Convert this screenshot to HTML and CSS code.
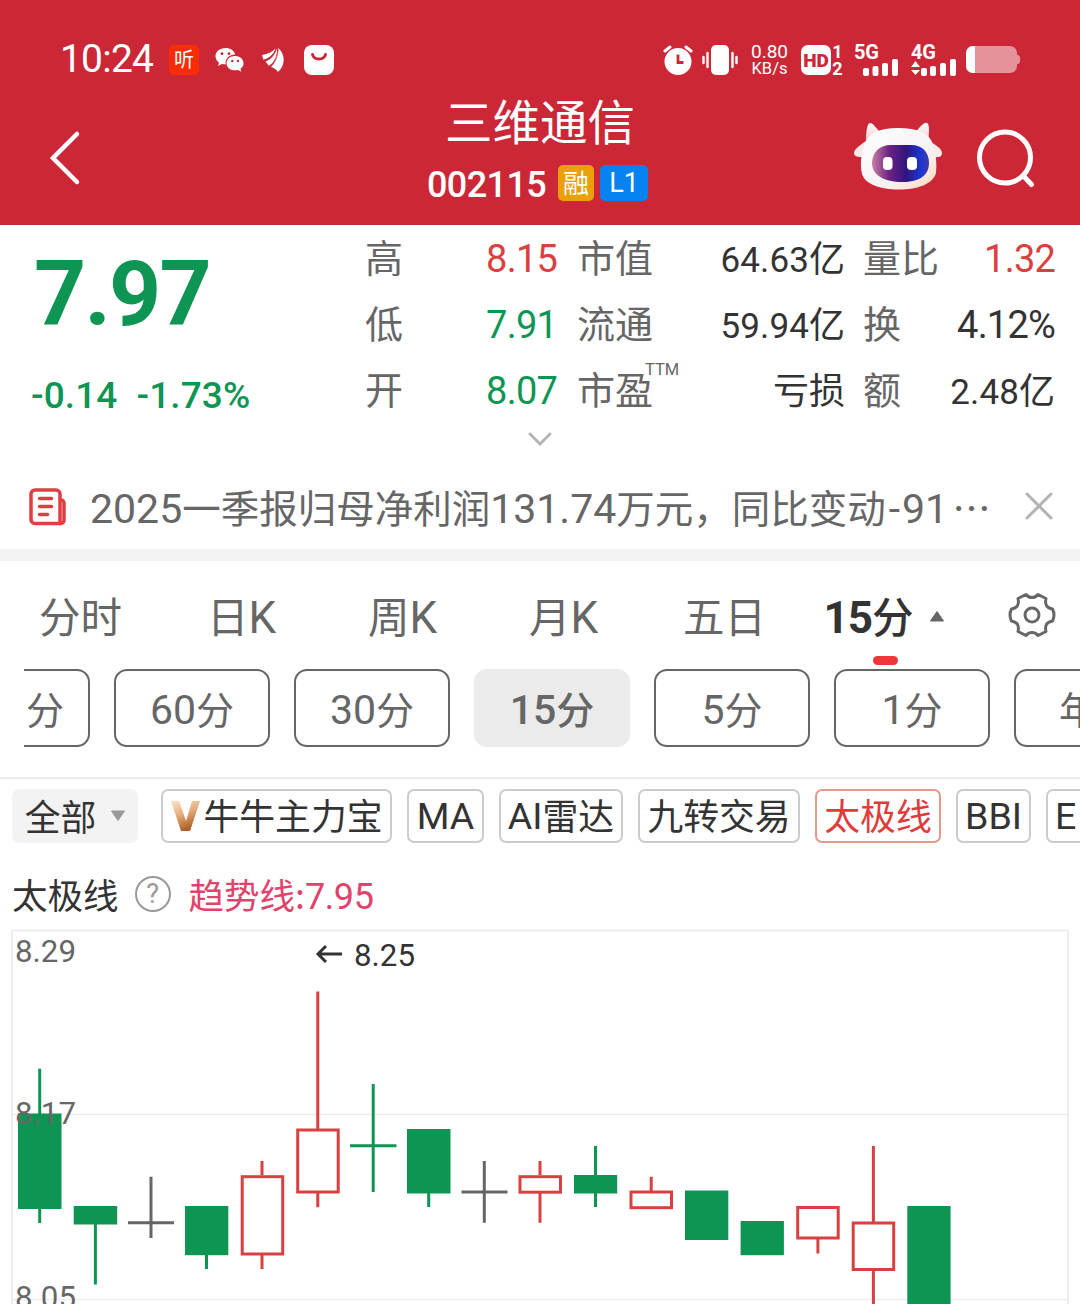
FILE: index.html
```html
<!DOCTYPE html>
<html lang="zh-CN">
<head>
<meta charset="utf-8">
<title>三维通信 002115</title>
<link rel="stylesheet" href="styles.css">
</head>
<body>
<header class="header">
  <div class="status">
    <span class="time">10:24</span>
    <span class="app-ting">听</span>
    <svg class="i-wechat" width="29" height="26" viewBox="0 0 29 26"><path fill="#fff" d="M10.500 1C4.700 1 .5 4.700.5 9.300c0 2.600 1.300 4.800 3.500 6.400L3 19l4-2c1.200.3 2.400.5 3.600.5C10 11.500 14 8 20.300 7.600 19.300 3.700 15.300 1 10.500 1z"/><path fill="#fff" d="M20 9c-5 0-8.500 3.200-8.500 7.200S15 23.300 20 23.300c1 0 2-.1 2.900-.4l3.400 1.800-.9-2.900c1.900-1.300 3.100-3.300 3.100-5.600C28.500 12.200 25 9 20 9z"/><g fill="#cb2737"><circle cx="7" cy="6.700" r="1.400"/><circle cx="14" cy="6.700" r="1.400"/><circle cx="17.300" cy="14" r="1.200"/><circle cx="23" cy="14" r="1.200"/></g></svg>
    <svg class="i-wing" width="24" height="26" viewBox="0 0 24 26" fill="#fff"><path d="M1 8C7 7 11 5 15 1.500 13 7 9 11 2.500 13z"/><path d="M4.500 14.500C11 12 14.500 7 16 1c2.500 7-1 14-8 18z"/><path d="M10 20c5-5 7.500-11 7.500-19 7 7 7 17-.5 24-1.500-2.500-4-4-7-5z"/><path d="M2 13.500C9 11.500 13 7 15.300 1.500M8 19.500c6-4.500 8.500-10 8.700-18" fill="none" stroke="#cb2737" stroke-width="1"/></svg>
    <svg class="i-bag" width="30" height="30" viewBox="0 0 30 30"><rect width="30" height="30" rx="8" fill="#fff"/><path d="M8.500 9.500c1.500 6 11.500 6 13 0" fill="none" stroke="#cb2737" stroke-width="3" stroke-linecap="round"/></svg>
    <svg class="i-alarm" width="30" height="30" viewBox="0 0 30 30"><circle cx="15" cy="16.500" r="13.500" fill="#fff"/><path d="M2 6l5-4M23 2l5 4" stroke="#fff" stroke-width="3" stroke-linecap="round"/><path d="M15 9.500v8h5.500" fill="none" stroke="#cb2737" stroke-width="2.800"/></svg>
    <svg class="i-vib" width="36" height="30" viewBox="0 0 36 30"><rect x="9" width="18" height="30" rx="5" fill="#fff"/><path d="M1.500 12v6M5.500 8v14M30.500 8v14M34.500 12v6" stroke="#fff" stroke-width="2.400" stroke-linecap="round"/></svg>
    <span class="speed"><span>0.80</span><span>KB/s</span></span>
    <span class="hd">HD</span>
    <span class="sims"><span>1</span><span>2</span></span>
    <span class="net net5">5G<svg width="36" height="17" viewBox="0 0 36 17" fill="#fff"><rect y="9" width="6" height="8" rx="2"/><rect x="9.500" y="7" width="6" height="10" rx="2"/><rect x="19" y="4" width="6" height="13" rx="2"/><rect x="29" width="6" height="17" rx="2"/></svg></span>
    <span class="net net4">4G<svg width="45" height="17" viewBox="0 0 45 17" fill="#fff"><path d="M0 8l4.500-6L9 8zM0 11l4.500 5L9 11z"/><rect x="10" y="9" width="6" height="8" rx="2"/><rect x="19" y="7" width="6" height="10" rx="2"/><rect x="29" y="4" width="6" height="13" rx="2"/><rect x="39" width="6" height="17" rx="2"/></svg></span>
    <svg class="i-bat" width="55" height="28" viewBox="0 0 55 28"><rect width="51" height="27" rx="7" fill="#e5929b"/><path d="M51 9h1c3 0 3 9 0 9h-1z" fill="#e5929b"/><path d="M9 0v27H7a7 7 0 0 1-7-7V7a7 7 0 0 1 7-7z" fill="#fff"/></svg>
  </div>
  <div class="nav">
    <svg class="back" width="34" height="56" viewBox="0 0 34 56"><path d="M29 4L5 28l24 24" fill="none" stroke="#fff" stroke-width="4.500" stroke-linecap="round"/></svg>
    <div class="title">
      <h1>三维通信</h1>
      <div class="code"><span class="code-num">002115</span><span class="badge rong">融</span><span class="badge l1">L1</span></div>
    </div>
    <div class="actions">
      <svg width="90" height="70" viewBox="0 0 90 70">
        <defs>
          <linearGradient id="face" x1="0" y1="0" x2="1" y2="1"><stop offset="0" stop-color="#fff"/><stop offset=".65" stop-color="#f5f1f3"/><stop offset="1" stop-color="#ffd9b8"/></linearGradient>
          <linearGradient id="visor" x1="0" y1="0" x2="1" y2="0"><stop offset="0" stop-color="#c97fa2"/><stop offset=".3" stop-color="#6d2382"/><stop offset=".6" stop-color="#30147e"/><stop offset=".85" stop-color="#1c35d2"/><stop offset="1" stop-color="#403aa5"/></linearGradient>
          <linearGradient id="horn" x1="0" y1="0" x2="0" y2="1"><stop offset="0" stop-color="#fff"/><stop offset="1" stop-color="#f6c5c8"/></linearGradient>
        </defs>
        <path d="M13 20C13 10 14 1 17 1s6 5 11 10zM62 11c5-6 9-11 12-10s2 11 1 20z" fill="url(#horn)"/>
        <path d="M16 16C10 22 1 26 1 31c0 5 8 4 15 4zM73 16c6 6 16 9 16 15s-8 4-15 3z" fill="#fbe9e9"/>
        <path d="M45 6c20 0 31 5 35 16 3 9 4 20 3 29-3 11-18 16.500-37 16.500S12 62 9 52c-2-9-1-20 2-28C15 11 26 6 45 6z" fill="url(#face)"/>
        <path d="M38 23h20c12 0 18 8 18 18 0 12-9 19-27 19S19 53 19 41c0-10 7-18 19-18z" fill="url(#visor)"/>
        <rect x="30" y="35" width="9.500" height="13" rx="4" fill="#fff"/><rect x="54" y="35" width="10" height="13" rx="4" fill="#fff"/>
      </svg>
      <svg width="60" height="60" viewBox="0 0 60 60"><circle cx="28" cy="28.500" r="25.500" fill="none" stroke="#fff" stroke-width="5"/><path d="M46.500 47l8 8.500" stroke="#fff" stroke-width="5" stroke-linecap="round"/></svg>
    </div>
  </div>
</header>

<section class="quote">
  <div class="price">
    <div class="last">7.97</div>
    <div class="change"><span>-0.14</span><span>-1.73%</span></div>
  </div>
  <dl class="stats">
    <dt>高</dt><dd class="up">8.15</dd><dt>市值</dt><dd class="amt">64.63<b>亿</b></dd><dt>量比</dt><dd class="up">1.32</dd>
    <dt>低</dt><dd class="down">7.91</dd><dt>流通</dt><dd class="amt">59.94<b>亿</b></dd><dt>换</dt><dd>4.12%</dd>
    <dt>开</dt><dd class="down">8.07</dd><dt>市盈<sup>TTM</sup></dt><dd class="amt"><b>亏损</b></dd><dt>额</dt><dd class="amt">2.48<b>亿</b></dd>
  </dl>
  <svg class="chev" width="26" height="16" viewBox="0 0 26 16"><path d="M3 3l10 10L23 3" fill="none" stroke="#b5b5b5" stroke-width="3" stroke-linecap="round"/></svg>
</section>

<section class="news">
  <svg width="38" height="38" viewBox="0 0 38 38" fill="none" stroke="#e03f42" stroke-width="3.500" stroke-linejoin="round" stroke-linecap="round"><path d="M32 35.500H6a4 4 0 0 1-4-4V6a4 4 0 0 1 4-4h21a4 4 0 0 1 4 4v29.500M31 12h1a3 3 0 0 1 3 3v17.500a3 3 0 0 1-3 3"/><path d="M10.500 10.500h12M10.500 18.500h12M10.500 26.500h8"/></svg>
  <p><i>2025</i>一季报归母净利润<i>131.74</i>万元，同比变动<i class="minus">-</i><i>91</i><em>⋯</em></p>
  <svg class="close" width="30" height="30" viewBox="0 0 30 30"><path d="M3 3l24 24M27 3L3 27" stroke="#b3b3b3" stroke-width="3" stroke-linecap="round"/></svg>
</section>

<nav class="tabs">
  <span>分时</span><span>日<i>K</i></span><span>周<i>K</i></span><span>月<i>K</i></span><span>五日</span>
  <span class="on"><i>15</i>分<svg class="tri" width="16" height="12" viewBox="0 0 16 12"><path d="M8 1.500L14.500 11h-13z" fill="#666" stroke="#666" stroke-linejoin="round"/></svg></span>
  <svg class="gear" width="48" height="46" viewBox="0 0 48 46" fill="none" stroke="#666" stroke-width="3"><path stroke-linejoin="round" d="M18 2.500C21 6.500 27 6.500 30 2.500L38 6.500C36.500 13 39 16 44.500 17Q47.500 23 44.500 29C39 30 36.500 33 38 39.500L30 43.500C27 39.500 21 39.500 18 43.500L10 39.500C11.500 33 9 30 3.500 29Q.5 23 3.500 17C9 16 11.500 13 10 6.500z"/><circle cx="24" cy="23" r="7"/></svg>
</nav>

<div class="periods">
  <span>分</span><span><i>60</i>分</span><span><i>30</i>分</span><span class="on"><i>15</i>分</span><span><i>5</i>分</span><span><i>1</i>分</span><span>年</span>
</div>

<div class="chips">
  <span class="all">全部<svg width="16" height="12" viewBox="0 0 16 12"><path d="M1.500 1h13L8 10.500z" fill="#999" stroke="#999" stroke-linejoin="round"/></svg></span>
  <span class="w1"><svg width="29" height="32" viewBox="0 0 29 32"><defs><linearGradient id="vg" x1="0" y1="0" x2=".4" y2="1"><stop offset="0" stop-color="#ffe6c8"/><stop offset=".5" stop-color="#e5ac7b"/><stop offset="1" stop-color="#ad6028"/></linearGradient></defs><path d="M0 1h8l7 20 6-20h8L19 31h-9z" fill="url(#vg)"/></svg>牛牛主力宝</span>
  <span class="w2"><i>MA</i></span><span class="w3"><i>AI</i>雷达</span><span class="w4">九转交易</span><span class="w5 on">太极线</span><span class="w6"><i>BBI</i></span><span class="w7"><i>E</i></span>
</div>

<div class="legend"><span>太极线</span><span class="help">?</span><span class="trend">趋势线:<i>7.95</i></span></div>

<svg class="chart" width="1080" height="384" viewBox="0 920 1080 384">
  <g fill="none" stroke="#ededed" stroke-width="2"><path d="M12 1310V930.500H1068V1310"/><path d="M12 1114.500H1068M12 1299.500H1068" stroke-width="1.500"/></g>
  <g stroke="#0f9553" stroke-width="3"><path d="M39.700 1068.700V1223M95.400 1210V1284.600M206.500 1240V1269M373.200 1084V1192M350 1145.700H396.500M428.700 1180V1207M595.500 1146V1207"/></g>
  <g fill="#0f9553"><rect x="18" y="1113.500" width="43.500" height="95.500"/><rect x="73.700" y="1206" width="43.500" height="18.500"/><rect x="185" y="1206" width="43.300" height="49.200"/><rect x="407" y="1129" width="43.500" height="64.500"/><rect x="574" y="1175" width="43.200" height="18.500"/><rect x="685" y="1190.500" width="43.300" height="49.500"/><rect x="740.600" y="1221" width="43.300" height="34.200"/><rect x="907.300" y="1206" width="43.300" height="110"/></g>
  <g stroke="#666" stroke-width="3"><path d="M151 1176.700V1238M128 1222.700H174M484.300 1161V1222.700M461.500 1192H507.500"/></g>
  <g stroke="#d94141" stroke-width="3" fill="none"><path d="M262 1161V1175M262 1255V1269M317.800 991.500V1129M317.800 1193V1207.300M540 1161V1175M540 1193V1222.700M651.200 1176.700V1191M817.900 1238V1253.500M873.400 1146V1222M873.400 1270V1310"/><rect x="242.200" y="1176.700" width="40.500" height="77.300"/><rect x="297.700" y="1130" width="40.500" height="62"/><rect x="520" y="1176.700" width="40.500" height="15.500"/><rect x="631" y="1192" width="40.500" height="15.700"/><rect x="797.700" y="1207.500" width="40.500" height="30.500"/><rect x="853.200" y="1223" width="40.500" height="46.500"/></g>
  <g class="axis"><text x="15" y="962" textLength="61" lengthAdjust="spacingAndGlyphs">8.29</text><text x="15" y="1123.700" textLength="61" lengthAdjust="spacingAndGlyphs">8.17</text><text x="15" y="1308" textLength="61" lengthAdjust="spacingAndGlyphs">8.05</text><text class="peak" x="354" y="966" textLength="61" lengthAdjust="spacingAndGlyphs">8.25</text></g>
  <path d="M342 954H318M326 946L318 954L326 962" fill="none" stroke="#333" stroke-width="3"/>
</svg>
</body>
</html>
```
FILE: styles.css
```css
* { box-sizing: border-box; }
body { margin: 0; width: 1080px; height: 1304px; overflow: hidden; background: #fff; color: #333; font-family: "Noto Sans CJK SC", sans-serif; }
i, em { font-style: normal; font-family: Roboto, "Noto Sans CJK SC", sans-serif; line-height: 0; }
svg { display: block; flex: none; }

.header { height: 225px; background: #cb2737; color: #fff; }
.status { height: 89px; padding: 30px 0 0 60px; display: flex; align-items: center; font-family: Roboto, sans-serif; }
.time { width: 109px; font-size: 39px; line-height: 59px; letter-spacing: -.8px; white-space: nowrap; }
.app-ting { width: 30px; height: 30px; border-radius: 5px; background: #f92c05; font: 20px/28px "Noto Sans CJK SC", sans-serif; text-align: center; }
.i-wechat { margin-left: 16px; }
.i-wing { margin-left: 17px; }
.i-bag { margin-left: 19px; }
.i-alarm { margin-left: 329px; }
.i-vib { margin-left: 9px; }
.speed { margin-left: 12px; width: 39px; display: flex; flex-direction: column; align-items: center; font-size: 19px; line-height: 17px; white-space: nowrap; }
.speed span:last-child { font-size: 16.500px; }
.hd { margin-left: 12px; width: 30px; height: 30px; border-radius: 7px; background: #fff; color: #cb2737; font-weight: 900; font-size: 19px; line-height: 31px; text-align: center; }
.sims { width: 13px; display: flex; flex-direction: column; align-items: center; font-weight: 700; font-size: 18px; line-height: 17px; }
.net { height: 32px; display: flex; flex-direction: column; font-weight: 700; font-size: 20px; line-height: 17px; letter-spacing: -.3px; }
.net svg { margin-top: -2px; }
.net5 { margin-left: 10px; width: 45px; }
.net5 svg { align-self: flex-end; }
.net4 { margin-left: 12px; width: 45px; }
.i-bat { margin-left: 10px; }
.nav { display: grid; grid-template-columns: 340px 400px 340px; height: 136px; }
.back { margin: 41px 0 0 48px; }
.title { text-align: center; }
h1 { margin: 1px 0 0; font-size: 47.500px; line-height: 60px; font-weight: 400; }
.code { display: flex; justify-content: center; align-items: center; height: 36px; margin-top: 15px; padding-right: 5px; }
.code-num { font: 500 36px/36px Roboto, sans-serif; width: 131px; padding-top: 3px; text-align: left; letter-spacing: -.6px; }
.badge { height: 36px; border-radius: 5px; text-align: center; }
.rong { width: 36px; background: #eaa008; font-size: 26px; line-height: 33px; }
.l1 { margin-left: 6px; width: 48px; background: #0683f0; font: 27px/37px Roboto, sans-serif; }
.actions { display: flex; padding: 33px 0 0 113px; gap: 34px; }
.actions svg:last-child { margin-top: 7px; }

.quote { height: 245px; display: grid; grid-template-columns: 365px 715px; grid-template-rows: 199px 46px; padding-top: 1px; }
.price { color: #0f9553; font-family: Roboto, sans-serif; padding-left: 31px; }
.last { font-size: 91px; font-weight: 700; line-height: 100px; margin: 18px 0 0 3px; letter-spacing: -1.800px; }
.change { display: flex; gap: 19px; font-size: 37px; font-weight: 500; line-height: 50px; margin-top: 27px; letter-spacing: .1px; }
.stats { margin: 0; display: grid; grid-template-columns: 92px 100px 108px 180px 98px 112px; grid-auto-rows: 66px; line-height: 66px; font-size: 38px; }
.stats dt { color: #666; white-space: nowrap; line-height: 60px; }
.stats dt:nth-of-type(3n+2) { padding-left: 20px; }
.stats dt:nth-of-type(3n) { padding-left: 18px; }
.stats dd { margin: 0; text-align: right; font-family: Roboto, sans-serif; white-space: nowrap; letter-spacing: -.8px; }
.stats dd b { font: 36px/0 "Noto Sans CJK SC", sans-serif; letter-spacing: 0; }
.stats .amt { font-size: 35px; letter-spacing: .1px; line-height: 69px; }
.up { color: #d94141; }
.down { color: #0f9553; }
.stats sup { position: absolute; font: 16.500px/20px Roboto, sans-serif; margin: 2px 0 0 -8px; }
.chev { grid-column: 1 / 3; justify-self: center; margin-top: 6px; }

.news { height: 91px; border-bottom: 12px solid #f3f3f3; display: flex; padding: 18px 0 0 29px; color: #666; }
.news p { margin: -10px 0 0 23px; width: 912px; font-size: 38.500px; line-height: 56px; white-space: nowrap; }
.news i { font-size: 41px; }
.news .minus { display: inline-block; padding: 0 2px 0 3px; }
.news em { margin-left: 4px; }
.close { margin: 3px 0 0 22px; }

.tabs { height: 108px; display: grid; grid-template-columns: repeat(6, 161px) 1fr; color: #666; font-size: 41.500px; line-height: 108px; text-align: center; }
.tabs i { font-size: 44px; }
.tabs span { position: relative; }
.tabs .on { color: #333; font-weight: 500; padding-right: 34px; white-space: nowrap; }
.tabs .on i { letter-spacing: -1px; font-weight: 700; }
.tabs .on::after { content: ""; position: absolute; left: 68px; top: 95px; width: 25px; height: 9px; border-radius: 5px; background: #ef3638; }
.tri { position: absolute; left: 124px; top: 49px; }
.gear { margin: 31px 0 0 42px; }

.periods { height: 108px; margin-left: 24px; overflow: hidden; display: flex; gap: 24px; color: #666; font-size: 38px; line-height: 74px; }
.periods span { flex: none; width: 156px; height: 78px; border: 2px solid #666; border-radius: 13px; text-align: center; }
.periods span:first-child { margin-left: -90px; text-align: right; padding-right: 24px; }
.periods span:last-child { text-align: left; padding-left: 43px; }
.periods i { font-size: 41px; }
.periods .on { background: #ebebeb; border-color: #ebebeb; font-weight: 500; }

.chips { height: 76px; border-top: 2px solid #ebebeb; padding-top: 10px; display: flex; gap: 15px; padding-left: 12px; overflow: hidden; font-size: 35.800px; line-height: 47px; }
.chips span { flex: none; height: 54px; border: 2px solid #ccc; border-radius: 7px; display: flex; justify-content: center; white-space: nowrap; }
.chips i { font-size: 37.500px; line-height: 50px; }
.chips .w3 i { line-height: 50px; }
.chips .all { width: 126px; margin-right: 8px; padding-left: 1px; background: #f3f3f3; border-color: #f3f3f3; line-height: 49px; }
.all svg { margin: 19px 0 0 14px; }
.w1 { width: 231px; }
.w1 svg { margin: 9px 4px 0 0; }
.w2 { width: 77px; }
.w3 { width: 124px; }
.w4 { width: 162px; }
.w5 { width: 126px; }
.w6 { width: 75px; }
.chips .w7 { width: 150px; justify-content: flex-start; padding-left: 7px; }
.chips .on { color: #df3b3b; border-color: #e39a8d; }

.legend { height: 67px; padding: 15px 0 0 12px; display: flex; font-size: 35.500px; line-height: 52px; }
.help { width: 36px; height: 36px; margin: 8px 18px 0 16px; border: 2px solid #999; border-radius: 50%; color: #999; font: 27px/33px Roboto, sans-serif; text-align: center; }
.trend { color: #e0436b; }
.legend i { font-size: 36px; letter-spacing: -.4px; }
.axis { fill: #666; font: 32px Roboto, sans-serif; }
.peak { fill: #333; }
```
